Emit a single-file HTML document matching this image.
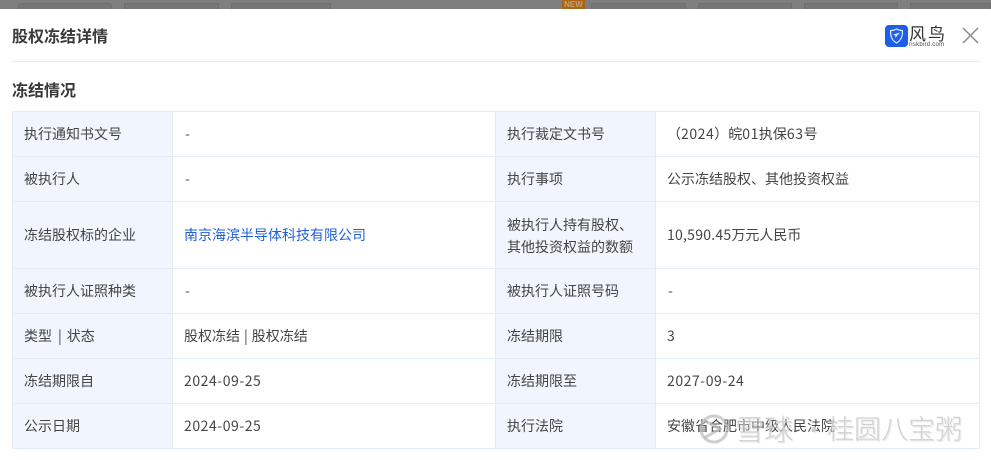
<!DOCTYPE html>
<html lang="zh">
<head>
<meta charset="utf-8">
<style>
html,body{margin:0;padding:0;background:#fff}
body{width:991px;height:460px;position:relative;overflow:hidden;font-family:"Liberation Sans","Noto Sans CJK SC",sans-serif;color:#333}
.a{position:absolute}
.t{position:absolute;white-space:nowrap;font-family:"Noto Sans CJK SC",sans-serif;font-size:14px;line-height:20px;color:#444}
.d{letter-spacing:.55px}
.l{position:absolute;background:#e3ebf3}
.bg{position:absolute;background:#f1f5fd}
.wm{position:absolute;top:408px;font-family:"Noto Sans CJK SC",sans-serif;font-size:29px;line-height:40px;white-space:nowrap;color:rgba(196,196,196,.72);text-shadow:0 0 2px rgba(255,255,255,.95),1px 1px 1px rgba(130,130,130,.3);font-weight:300}
</style>
</head>
<body>
<div class="a" style="left:0;top:0;width:991px;height:9px;background:#7f7f7f"></div>
<div class="a" style="left:18px;top:3px;width:94px;height:6px;background:#767676;border:1px solid #6e6e6e;border-bottom:0;border-radius:3px 3px 0 0;box-sizing:border-box"></div>
<div class="a" style="left:124px;top:3px;width:95px;height:6px;background:#767676;border:1px solid #6e6e6e;border-bottom:0;box-sizing:border-box"></div>
<div class="a" style="left:231px;top:3px;width:100px;height:6px;background:#767676;border:1px solid #6e6e6e;border-bottom:0;box-sizing:border-box"></div>
<div class="a" style="left:591px;top:3px;width:95px;height:6px;background:#767676;border:1px solid #6e6e6e;border-bottom:0;box-sizing:border-box"></div>
<div class="a" style="left:698px;top:3px;width:94px;height:6px;background:#767676;border:1px solid #6e6e6e;border-bottom:0;box-sizing:border-box"></div>
<div class="a" style="left:804px;top:3px;width:94px;height:6px;background:#767676;border:1px solid #6e6e6e;border-bottom:0;box-sizing:border-box"></div>
<div class="a" style="left:910px;top:3px;width:81px;height:6px;background:#767676;border:1px solid #6e6e6e;border-bottom:0;box-sizing:border-box"></div>
<div class="a" style="left:562px;top:0;width:23px;height:9px;background:#a8661a;color:#c9a06a;font:bold 8px/9px 'Liberation Sans',sans-serif;text-align:center">NEW</div>

<div class="t" style="left:12px;top:24px;font-size:16px;line-height:22px;font-weight:700;color:#3a3a3a">股权冻结详情</div>
<div class="a" style="left:12px;top:61px;width:968px;height:1px;background:#e3ebf3"></div>
<div class="t" style="left:12px;top:78px;font-size:16px;line-height:22px;font-weight:700;color:#3a3a3a">冻结情况</div>

<svg class="a" style="left:885px;top:25px" width="23" height="22" viewBox="0 0 23 22">
<rect width="23" height="22" rx="4" fill="#1d5fe8"/>
<path d="M11.5 4 C9.5 5.2 7.5 5.6 5.5 5.6 C5.5 11 6.5 15 11.5 18 C16.5 15 17.5 11 17.5 5.6 C15.5 5.6 13.5 5.2 11.5 4Z" fill="none" stroke="#dfe9ff" stroke-width="1.2"/>
<path d="M8 9.5 L15 7.5 L12 11 L10.5 13 L10.3 10.8Z" fill="#dfe9ff"/>
</svg>
<div class="t" style="left:909px;top:23px;font-size:17px;line-height:20px;color:#333;letter-spacing:2px">风鸟</div>
<div class="t" style="left:909px;top:41px;font:6px/8px 'Liberation Sans',sans-serif;color:#444;letter-spacing:.25px">riskbird.com</div>
<svg class="a" style="left:962px;top:27px" width="17" height="17" viewBox="0 0 17 17">
<path d="M1 1 L16 16 M16 1 L1 16" stroke="#8a8a8a" stroke-width="1.5" fill="none"/>
</svg>

<!-- label backgrounds -->
<div class="bg" style="left:12px;top:111px;width:160px;height:337px"></div>
<div class="bg" style="left:495px;top:111px;width:160px;height:337px"></div>
<!-- horizontal -->
<div class="l" style="left:12px;top:111px;width:968px;height:1px"></div>
<div class="l" style="left:12px;top:156px;width:968px;height:1px"></div>
<div class="l" style="left:12px;top:201px;width:968px;height:1px"></div>
<div class="l" style="left:12px;top:268px;width:968px;height:1px"></div>
<div class="l" style="left:12px;top:313px;width:968px;height:1px"></div>
<div class="l" style="left:12px;top:358px;width:968px;height:1px"></div>
<div class="l" style="left:12px;top:403px;width:968px;height:1px"></div>
<div class="l" style="left:12px;top:448px;width:968px;height:1px"></div>
<!-- vertical -->
<div class="l" style="left:12px;top:111px;width:1px;height:338px"></div>
<div class="l" style="left:172px;top:111px;width:1px;height:338px"></div>
<div class="l" style="left:495px;top:111px;width:1px;height:338px"></div>
<div class="l" style="left:655px;top:111px;width:1px;height:338px"></div>
<div class="l" style="left:979px;top:111px;width:1px;height:338px"></div>

<div class="t" style="left:24px;top:124px">执行通知书文号</div>
<div class="t" style="left:185px;top:124px">-</div>
<div class="t" style="left:507px;top:124px">执行裁定文书号</div>
<div class="t" style="left:667px;top:124px">（<span class="d">2024</span>）皖<span class="d">01</span>执保<span class="d">63</span>号</div>

<div class="t" style="left:24px;top:169px">被执行人</div>
<div class="t" style="left:185px;top:169px">-</div>
<div class="t" style="left:507px;top:169px">执行事项</div>
<div class="t" style="left:667px;top:169px">公示冻结股权、其他投资权益</div>

<div class="t" style="left:24px;top:225px">冻结股权标的企业</div>
<div class="t" style="left:184px;top:225px;color:#1f5fd8">南京海滨半导体科技有限公司</div>
<div class="t" style="left:507px;top:214px;line-height:22px">被执行人持有股权、<br>其他投资权益的数额</div>
<div class="t" style="left:667px;top:225px"><span style="letter-spacing:.25px">10,590.45</span>万元人民币</div>

<div class="t" style="left:24px;top:281px">被执行人证照种类</div>
<div class="t" style="left:185px;top:281px">-</div>
<div class="t" style="left:507px;top:281px">被执行人证照号码</div>
<div class="t" style="left:668px;top:281px">-</div>

<div class="t" style="left:24px;top:326px">类型<span style="margin:0 5px 0 6px">|</span>状态</div>
<div class="t" style="left:184px;top:326px">股权冻结<span style="margin:0 4px">|</span>股权冻结</div>
<div class="t" style="left:507px;top:326px">冻结期限</div>
<div class="t" style="left:667px;top:326px">3</div>

<div class="t" style="left:24px;top:371px">冻结期限自</div>
<div class="t d" style="left:184px;top:371px">2024-09-25</div>
<div class="t" style="left:507px;top:371px">冻结期限至</div>
<div class="t d" style="left:667px;top:371px">2027-09-24</div>

<div class="t" style="left:24px;top:416px">公示日期</div>
<div class="t d" style="left:184px;top:416px">2024-09-25</div>
<div class="t" style="left:507px;top:416px">执行法院</div>
<div class="t" style="left:667px;top:416px">安徽省合肥市中级人民法院</div>

<svg class="a" style="left:695px;top:411px" width="40" height="36" viewBox="0 0 40 36">
<circle cx="19" cy="18" r="13" fill="none" stroke="rgba(185,185,185,.7)" stroke-width="3"/>
<path d="M9 9 L25 18 L9 27" fill="none" stroke="rgba(185,185,185,.7)" stroke-width="3"/>
</svg>
<div class="wm" style="left:735px">雪球</div>
<div class="wm" style="left:802px;font-size:24px">·</div>
<div class="wm" style="left:827px;font-size:27px">桂圆八宝粥</div>
</body>
</html>
